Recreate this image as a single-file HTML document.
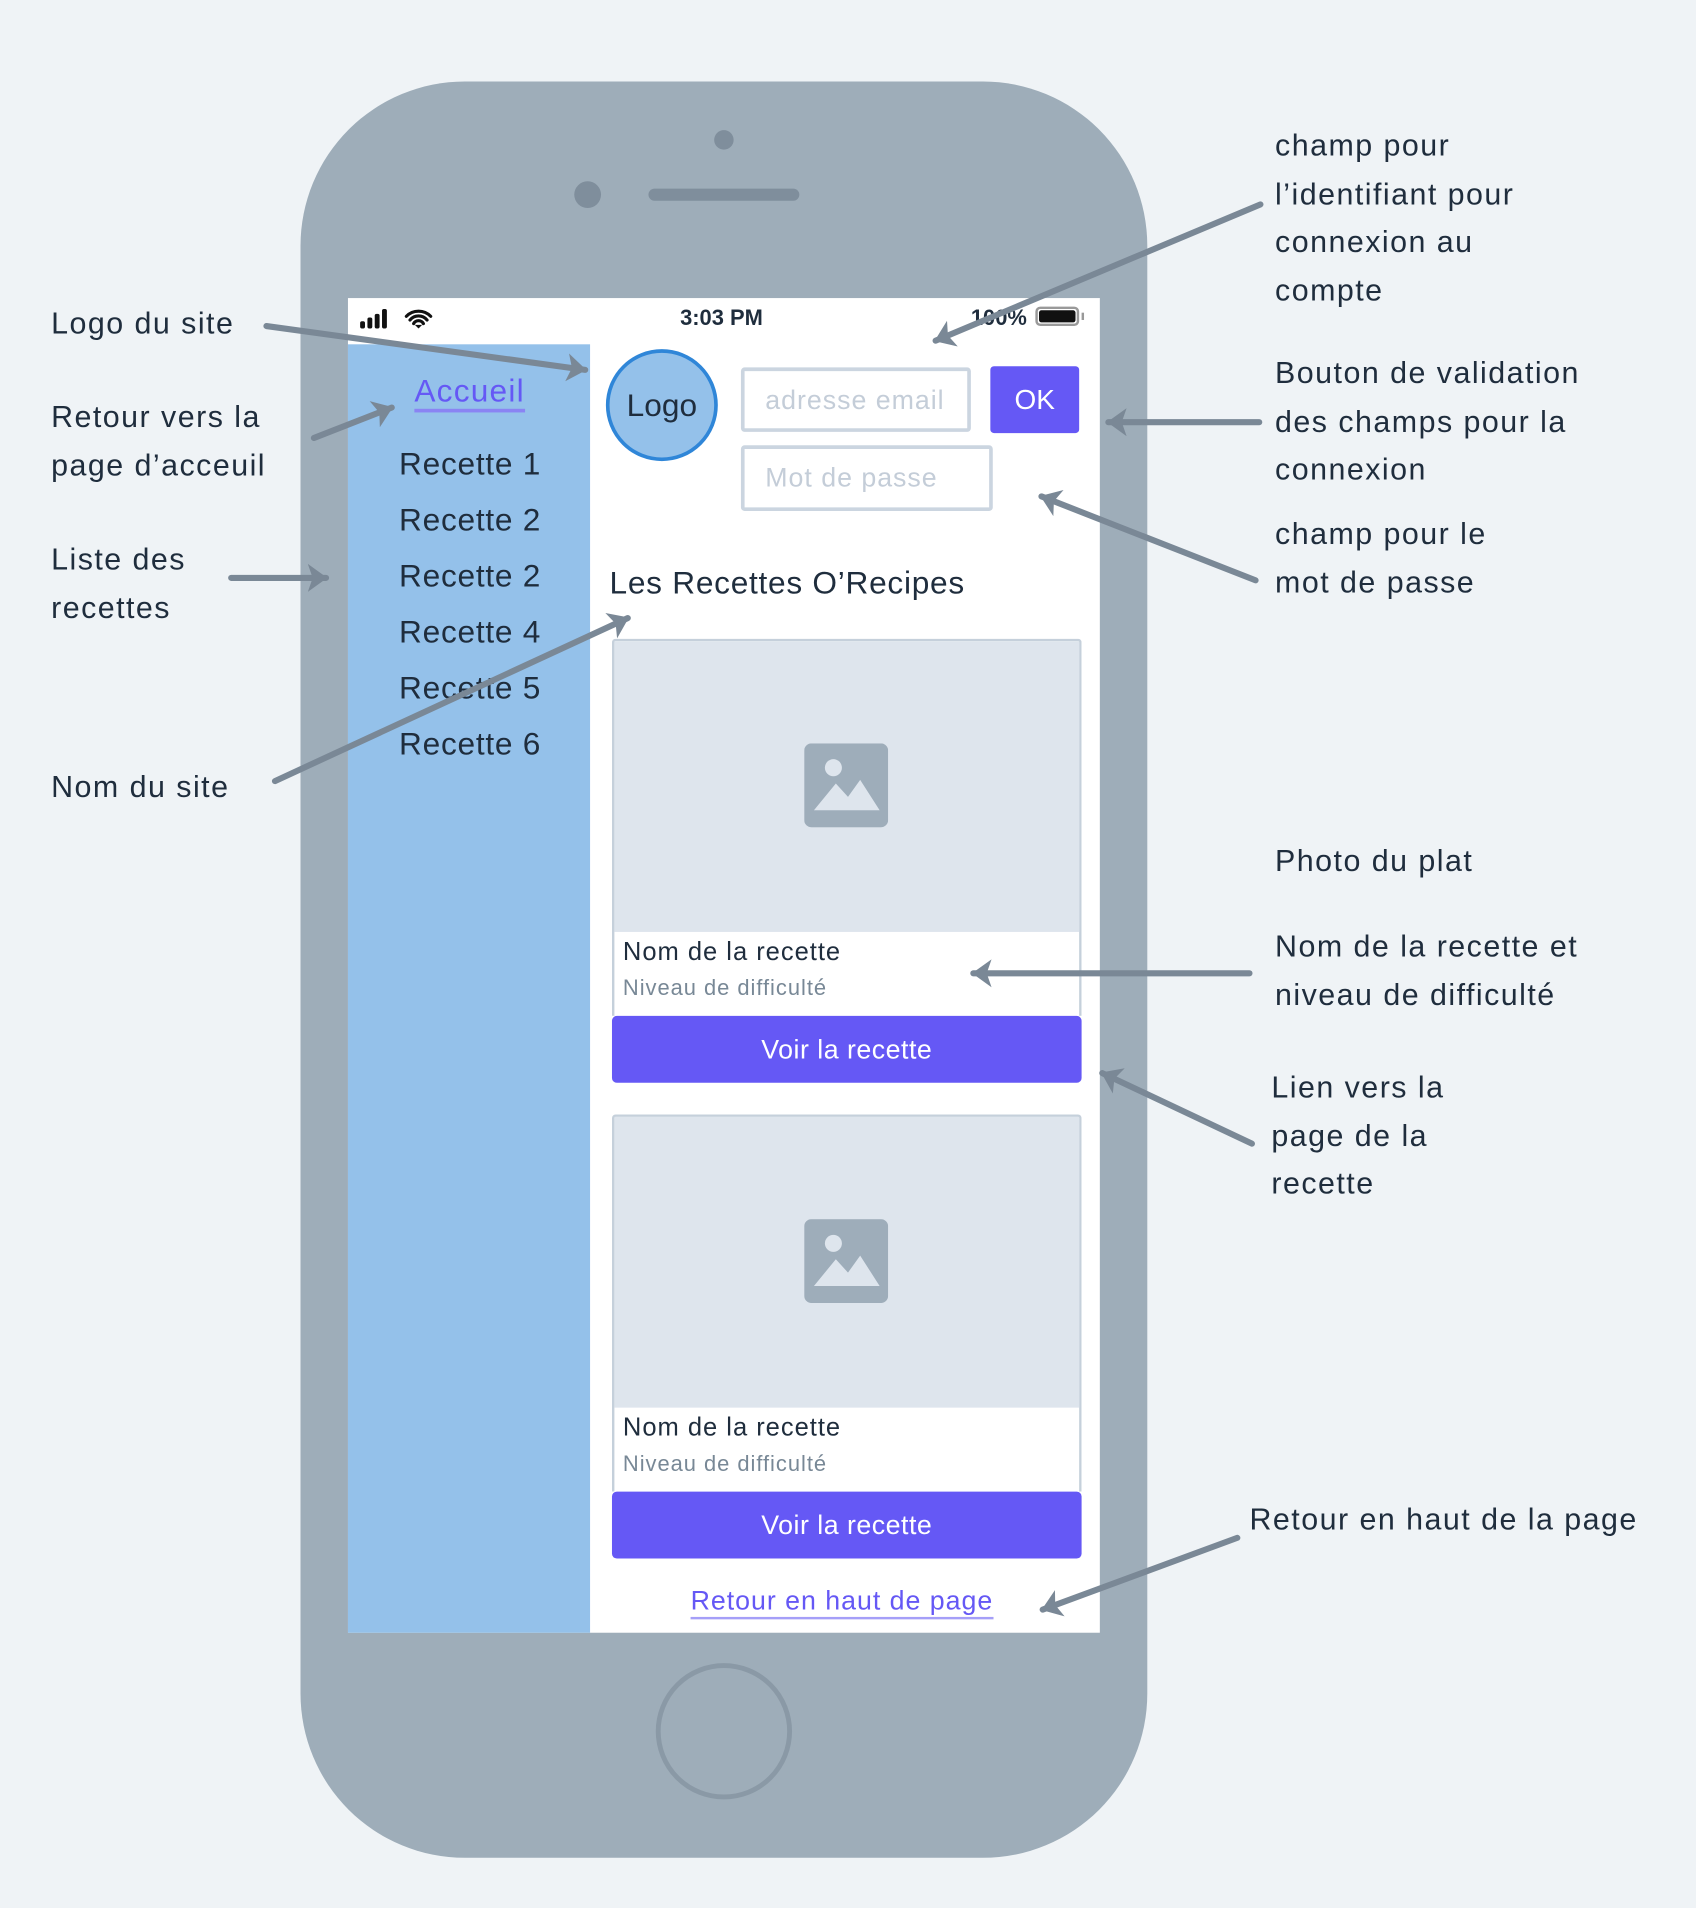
<!DOCTYPE html>
<html><head><meta charset="utf-8"><style>
html,body{margin:0;padding:0;width:1696px;height:1908px;overflow:hidden;background:#eff3f6;}
#w{position:absolute;left:0;top:0;width:1394px;height:1568px;transform:scale(1.21664);transform-origin:0 0;font-family:"Liberation Sans",sans-serif;color:#1f2d3d;}
.a{position:absolute;font-size:25px;line-height:40px;letter-spacing:1.2px;white-space:nowrap;}
.abs{position:absolute;}
.t{position:absolute;white-space:nowrap;}
</style></head><body><div id="w">
<div class="abs" style="left:247px;top:67px;width:696px;height:1460px;border-radius:135px;background:#9eadb9;"></div>
<div class="abs" style="left:587px;top:107px;width:16px;height:16px;border-radius:50%;background:#7f8e9c;"></div>
<div class="abs" style="left:472px;top:149px;width:22px;height:22px;border-radius:50%;background:#7f8e9c;"></div>
<div class="abs" style="left:533px;top:155px;width:124px;height:10px;border-radius:5px;background:#7f8e9c;"></div>
<div class="abs" style="left:539px;top:1367px;width:104px;height:104px;border-radius:50%;border:4px solid #8a99a6;"></div>
<div class="abs" style="left:286px;top:245px;width:618px;height:1097px;background:#fff;"></div>
<div class="abs" style="left:286px;top:283px;width:199px;height:1059px;background:#94c1ea;"></div>
<!-- status bar -->
<svg class="abs" style="left:294px;top:252px" width="70" height="20"><rect x="2" y="12" width="4" height="6" rx="1.5" fill="#111"/><rect x="8" y="9" width="4" height="9" rx="1.5" fill="#111"/><rect x="14" y="6" width="4" height="12" rx="1.5" fill="#111"/><rect x="20" y="2" width="4" height="16" rx="1.5" fill="#111"/><path d="M40 8a14 14 0 0 1 20 0M43 11a9 9 0 0 1 14 0M46 14a4.5 4.5 0 0 1 8 0" stroke="#111" stroke-width="2.6" fill="none" stroke-linecap="round"/><path d="M47 15l3 3 3-3z" fill="#111"/></svg>
<div class="t" style="left:593px;top:251px;transform:translateX(-50%);font-size:18px;font-weight:bold;">3:03 PM</div>
<div class="t" style="left:798px;top:251px;font-size:18px;font-weight:bold;">100%</div>
<div class="abs" style="left:851px;top:252px;width:36px;height:16px;border:2px solid #999;border-radius:4px;padding:1px;box-sizing:border-box;"><div style="width:100%;height:100%;background:#111;border-radius:2px;"></div></div>
<div class="abs" style="left:889px;top:257px;width:2px;height:6px;background:#999;"></div>
<!-- sidebar -->
<div class="t" style="left:386px;top:306px;transform:translateX(-50%);font-size:26px;letter-spacing:1px;color:#6558f5;border-bottom:3px solid #8a84f3;line-height:30px;">Accueil</div>
<div class="t" style="left:328px;top:366px;font-size:26px;letter-spacing:0.6px;line-height:30px;">Recette 1</div>
<div class="t" style="left:328px;top:412px;font-size:26px;letter-spacing:0.6px;line-height:30px;">Recette 2</div>
<div class="t" style="left:328px;top:458px;font-size:26px;letter-spacing:0.6px;line-height:30px;">Recette 2</div>
<div class="t" style="left:328px;top:504px;font-size:26px;letter-spacing:0.6px;line-height:30px;">Recette 4</div>
<div class="t" style="left:328px;top:550px;font-size:26px;letter-spacing:0.6px;line-height:30px;">Recette 5</div>
<div class="t" style="left:328px;top:596px;font-size:26px;letter-spacing:0.6px;line-height:30px;">Recette 6</div>
<!-- header -->
<div class="abs" style="left:498px;top:287px;width:92px;height:92px;border-radius:50%;background:#94c1ea;border:3px solid #2f86d8;box-sizing:border-box;font-size:26px;text-align:center;line-height:86px;">Logo</div>
<div class="abs" style="left:609px;top:302px;width:189px;height:53px;border:3px solid #cbd5e0;border-radius:3px;box-sizing:border-box;font-size:22px;letter-spacing:0.8px;color:#c4cdd8;line-height:47px;padding-left:17px;">adresse email</div>
<div class="abs" style="left:814px;top:301px;width:73px;height:55px;background:#6558f5;border-radius:3px;color:#fff;font-size:23px;text-align:center;line-height:55px;">OK</div>
<div class="abs" style="left:609px;top:366px;width:207px;height:54px;border:3px solid #cbd5e0;border-radius:3px;box-sizing:border-box;font-size:22px;letter-spacing:0.8px;color:#c4cdd8;line-height:48px;padding-left:17px;">Mot de passe</div>
<div class="t" style="left:501px;top:463px;font-size:26px;letter-spacing:0.6px;line-height:32px;">Les Recettes O’Recipes</div>
<!-- card 1 -->
<div class="abs" style="left:503px;top:525px;width:386px;height:310px;border:2px solid #c5d0db;border-bottom:none;border-radius:3px 3px 0 0;box-sizing:border-box;background:#fff;"><div style="height:239px;background:#dee5ed;"></div></div>
<svg class="abs" style="left:661px;top:611px" width="69" height="69"><rect width="69" height="69" rx="6" fill="#9eadba"/><circle cx="24" cy="20" r="7" fill="#dee5ed"/><path d="M8 55 L26 33 L36 44 L46 30 L62 55Z" fill="#dee5ed"/></svg>
<div class="t" style="left:512px;top:770px;font-size:21px;letter-spacing:0.8px;line-height:26px;">Nom de la recette</div>
<div class="t" style="left:512px;top:801px;font-size:18px;letter-spacing:0.8px;line-height:22px;color:#788896;">Niveau de difficulté</div>
<div class="abs" style="left:503px;top:835px;width:386px;height:55px;background:#6558f5;border-radius:4px;color:#fff;font-size:22px;letter-spacing:0.4px;text-align:center;line-height:55px;">Voir la recette</div>
<!-- card 2 -->
<div class="abs" style="left:503px;top:916px;width:386px;height:310px;border:2px solid #c5d0db;border-bottom:none;border-radius:3px 3px 0 0;box-sizing:border-box;background:#fff;"><div style="height:239px;background:#dee5ed;"></div></div>
<svg class="abs" style="left:661px;top:1002px" width="69" height="69"><rect width="69" height="69" rx="6" fill="#9eadba"/><circle cx="24" cy="20" r="7" fill="#dee5ed"/><path d="M8 55 L26 33 L36 44 L46 30 L62 55Z" fill="#dee5ed"/></svg>
<div class="t" style="left:512px;top:1161px;font-size:21px;letter-spacing:0.8px;line-height:26px;">Nom de la recette</div>
<div class="t" style="left:512px;top:1192px;font-size:18px;letter-spacing:0.8px;line-height:22px;color:#788896;">Niveau de difficulté</div>
<div class="abs" style="left:503px;top:1226px;width:386px;height:55px;background:#6558f5;border-radius:4px;color:#fff;font-size:22px;letter-spacing:0.4px;text-align:center;line-height:55px;">Voir la recette</div>
<div class="t" style="left:692px;top:1303px;transform:translateX(-50%);font-size:22px;letter-spacing:0.8px;line-height:26px;color:#6558f5;border-bottom:2px solid #a59ff8;">Retour en haut de page</div>
<!-- arrows -->
<svg class="abs" style="left:0;top:0" width="1394" height="1568">
<defs><marker id="m" markerWidth="5" markerHeight="5" refX="3" refY="2.5" orient="auto"><path d="M0 0.2L3.2 2.5L0 4.8L0.8 2.5Z" fill="#7a8896"/></marker></defs>
<g stroke="#7a8896" stroke-width="5" stroke-linecap="round" fill="none" marker-end="url(#m)">
<path d="M219 268L481 304"/><path d="M258 360L322 335"/><path d="M190 475L268 475"/><path d="M226 642L516 508"/>
<path d="M1036 168L769 280"/><path d="M1035 347L911 347"/><path d="M1032 477L856 408"/><path d="M1027 800L800 800"/>
<path d="M1029 940L906 882"/><path d="M1017 1264L857 1323"/>
</g></svg>
<!-- annotations -->
<div class="a" style="left:42px;top:246px;">Logo du site</div>
<div class="a" style="left:42px;top:323px;">Retour vers la<br>page d’acceuil</div>
<div class="a" style="left:42px;top:440px;">Liste des<br>recettes</div>
<div class="a" style="left:42px;top:627px;">Nom du site</div>
<div class="a" style="left:1048px;top:101px;line-height:39.5px;">champ pour<br>l’identifiant pour<br>connexion au<br>compte</div>
<div class="a" style="left:1048px;top:288px;line-height:39.5px;">Bouton de validation<br>des champs pour la<br>connexion</div>
<div class="a" style="left:1048px;top:420px;line-height:39.5px;">champ pour le<br>mot de passe</div>
<div class="a" style="left:1048px;top:688px;">Photo du plat</div>
<div class="a" style="left:1048px;top:758px;">Nom de la recette et<br>niveau de difficulté</div>
<div class="a" style="left:1045px;top:875px;line-height:39.5px;">Lien vers la<br>page de la<br>recette</div>
<div class="a" style="left:1027px;top:1229px;">Retour en haut de la page</div>
</div></body></html>
